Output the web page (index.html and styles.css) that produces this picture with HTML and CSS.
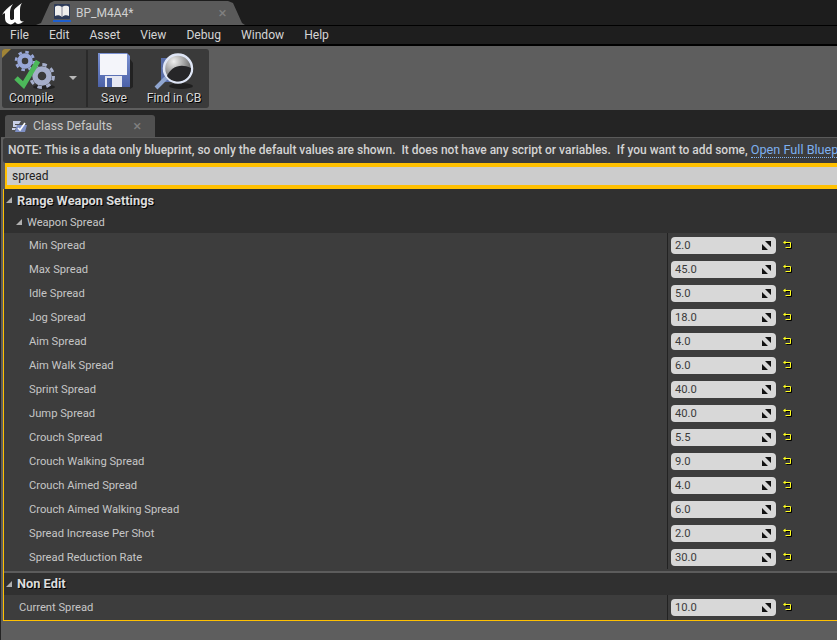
FILE: index.html
```html
<!DOCTYPE html>
<html lang="en">
<head>
<meta charset="utf-8">
<title>BP_M4A4</title>
<link rel="stylesheet" href="styles.css">
</head>
<body>
<div class="titlebar">
  <svg class="ue-logo" width="24" height="24" viewBox="0 0 24 24"><path fill="#fff" d="M1 14 C3 10 7 6 12 3 C10 6 9 8 9 11 L9 17 C9 19 11 20 13 18 L13 9 C14 7 17 5 21 2 C19 5 19 7 19 10 L19 18 C19 20 21 21 23 20 C21 22 19 23 17 23 C16 23 15 22 14 21 C12 23 10 24 8 23 C5 22 4 20 4 17 L4 13 C4 12 3 12 1 14 Z"/></svg>
  <div class="doc-tab">
    <svg class="book" width="18" height="19" viewBox="0 0 18 19"><rect x="1" y="1" width="16" height="15" rx="1" fill="#2c3a58"/><path fill="#eee" d="M2 4 C4 2 7 3 9 4 C11 3 14 2 16 4 L16 13 C14 12 11 12 9 14 C7 12 4 12 2 13 Z"/><path stroke="#889" stroke-width="1" d="M9 4 V14"/><rect x="0" y="17" width="18" height="2" fill="#1d5fd0"/></svg>
    <span class="doc-name">BP_M4A4*</span>
    <span class="close doc-close">×</span>
  </div>
</div>
<nav class="menubar">
  <span>File</span><span>Edit</span><span>Asset</span><span>View</span><span>Debug</span><span>Window</span><span>Help</span>
</nav>
<div class="toolstrip">
  <div class="toolbar">
    <div class="corner"></div>
    <div class="tool tool-compile">
      <svg width="44" height="40" viewBox="0 0 44 40">
        <ellipse cx="30" cy="36" rx="11" ry="2.5" fill="#222"/>
        <circle cx="11" cy="10" r="5.5" fill="none" stroke="#98a7d8" stroke-width="4.5"/>
        <circle cx="11" cy="10" r="9" fill="none" stroke="#98a7d8" stroke-width="2.6" stroke-dasharray="3.5 3.57"/>
        <circle cx="28" cy="25" r="7" fill="none" stroke="#a5aeca" stroke-width="5.5"/>
        <circle cx="28" cy="25" r="11.5" fill="none" stroke="#a5aeca" stroke-width="3" stroke-dasharray="4.5 4.53"/>
        <path d="M2 27 L9.5 34 L24 10" fill="none" stroke="#4cb85a" stroke-width="5"/>
      </svg>
      <span>Compile</span>
      <i class="caret"></i>
    </div>
    <div class="divider"></div>
    <div class="tool tool-save">
      <svg width="34" height="40" viewBox="0 0 34 40">
        <defs><linearGradient id="disk" x1="0" y1="0" x2="0" y2="1"><stop offset="0" stop-color="#7c92d2"/><stop offset="1" stop-color="#4c62a8"/></linearGradient></defs>
        <path d="M1 2 H30 L33 5 V36 H1 Z" fill="url(#disk)"/>
        <rect x="3" y="3" width="27" height="21" fill="#f4f5fa"/>
        <rect x="8" y="25" width="17" height="11" fill="#e6e8f2"/>
        <rect x="10" y="27" width="5" height="9" fill="#4a62a8"/>
        <path d="M33 8 L36 12 V36 L33 38 Z" fill="#222"/>
      </svg>
      <span>Save</span>
    </div>
    <div class="tool tool-find">
      <svg width="42" height="40" viewBox="0 0 42 40">
        <defs><radialGradient id="lens" cx="0.35" cy="0.25" r="0.8"><stop offset="0" stop-color="#f0f0f0"/><stop offset="0.6" stop-color="#8c8c8c"/><stop offset="1" stop-color="#444"/></radialGradient></defs>
        <ellipse cx="28" cy="35" rx="12" ry="3" fill="#1f1f1f"/>
        <rect x="8" y="7" width="14" height="24" fill="#5a6ea8"/>
        <path d="M3 37 L13 27" stroke="#8fa5cf" stroke-width="4" fill="none"/>
        <circle cx="25" cy="17.5" r="14" fill="url(#lens)" stroke="#dfe6f6" stroke-width="2.5"/>
        <path d="M14 25 C18 16 27 12 38 17 C38 25 32 30.500 25 30.500 C20 30.500 16 28 14 25 Z" fill="#262628"/>
      </svg>
      <span>Find in CB</span>
    </div>
  </div>
</div>
<div class="tabstrip">
  <div class="panel-tab">
    <svg width="16" height="13" viewBox="0 0 16 13"><path d="M1 1 H9 L7 4 H3 V5 H6 L5 7 H1 Z M0 8 H4 L3 10 H0 Z" fill="#c8cfe6"/><path d="M5 5 H15 L13 12 H3 Z" fill="#7e8fc4"/><path d="M6 8 L8 10 L13 3" fill="none" stroke="#fff" stroke-width="1.6"/></svg>
    <span class="panel-name">Class Defaults</span>
    <span class="close panel-close">×</span>
  </div>
</div>
<main class="panel">
  <div class="note">NOTE: This is a data only blueprint, so only the default values are shown.&nbsp; It does not have any script or variables.&nbsp; If you want to add some, <a class="link">Open Full Blueprint Editor</a></div>
  <div class="search">spread</div>
  <div class="details">
    <div class="cat"><i class="tri"></i>Range Weapon Settings</div>
    <div class="subcat"><i class="tri"></i>Weapon Spread</div>
    <div class="row"><div class="name">Min Spread</div><div class="val"><div class="box">2.0<svg class="spin" viewBox="0 0 9 9"><path d="M3 0 H9 V6 Z M0 3 L6 9 H0 Z"/></svg></div><svg class="reset" viewBox="0 0 9 9"><path d="M1 1.500 H7.500 V6.500 H2.500"/><path class="head" d="M0 1.500 L2.500 -0.500 V3.500 Z"/></svg></div></div>
    <div class="row"><div class="name">Max Spread</div><div class="val"><div class="box">45.0<svg class="spin" viewBox="0 0 9 9"><path d="M3 0 H9 V6 Z M0 3 L6 9 H0 Z"/></svg></div><svg class="reset" viewBox="0 0 9 9"><path d="M1 1.500 H7.500 V6.500 H2.500"/><path class="head" d="M0 1.500 L2.500 -0.500 V3.500 Z"/></svg></div></div>
    <div class="row"><div class="name">Idle Spread</div><div class="val"><div class="box">5.0<svg class="spin" viewBox="0 0 9 9"><path d="M3 0 H9 V6 Z M0 3 L6 9 H0 Z"/></svg></div><svg class="reset" viewBox="0 0 9 9"><path d="M1 1.500 H7.500 V6.500 H2.500"/><path class="head" d="M0 1.500 L2.500 -0.500 V3.500 Z"/></svg></div></div>
    <div class="row"><div class="name">Jog Spread</div><div class="val"><div class="box">18.0<svg class="spin" viewBox="0 0 9 9"><path d="M3 0 H9 V6 Z M0 3 L6 9 H0 Z"/></svg></div><svg class="reset" viewBox="0 0 9 9"><path d="M1 1.500 H7.500 V6.500 H2.500"/><path class="head" d="M0 1.500 L2.500 -0.500 V3.500 Z"/></svg></div></div>
    <div class="row"><div class="name">Aim Spread</div><div class="val"><div class="box">4.0<svg class="spin" viewBox="0 0 9 9"><path d="M3 0 H9 V6 Z M0 3 L6 9 H0 Z"/></svg></div><svg class="reset" viewBox="0 0 9 9"><path d="M1 1.500 H7.500 V6.500 H2.500"/><path class="head" d="M0 1.500 L2.500 -0.500 V3.500 Z"/></svg></div></div>
    <div class="row"><div class="name">Aim Walk Spread</div><div class="val"><div class="box">6.0<svg class="spin" viewBox="0 0 9 9"><path d="M3 0 H9 V6 Z M0 3 L6 9 H0 Z"/></svg></div><svg class="reset" viewBox="0 0 9 9"><path d="M1 1.500 H7.500 V6.500 H2.500"/><path class="head" d="M0 1.500 L2.500 -0.500 V3.500 Z"/></svg></div></div>
    <div class="row"><div class="name">Sprint Spread</div><div class="val"><div class="box">40.0<svg class="spin" viewBox="0 0 9 9"><path d="M3 0 H9 V6 Z M0 3 L6 9 H0 Z"/></svg></div><svg class="reset" viewBox="0 0 9 9"><path d="M1 1.500 H7.500 V6.500 H2.500"/><path class="head" d="M0 1.500 L2.500 -0.500 V3.500 Z"/></svg></div></div>
    <div class="row"><div class="name">Jump Spread</div><div class="val"><div class="box">40.0<svg class="spin" viewBox="0 0 9 9"><path d="M3 0 H9 V6 Z M0 3 L6 9 H0 Z"/></svg></div><svg class="reset" viewBox="0 0 9 9"><path d="M1 1.500 H7.500 V6.500 H2.500"/><path class="head" d="M0 1.500 L2.500 -0.500 V3.500 Z"/></svg></div></div>
    <div class="row"><div class="name">Crouch Spread</div><div class="val"><div class="box">5.5<svg class="spin" viewBox="0 0 9 9"><path d="M3 0 H9 V6 Z M0 3 L6 9 H0 Z"/></svg></div><svg class="reset" viewBox="0 0 9 9"><path d="M1 1.500 H7.500 V6.500 H2.500"/><path class="head" d="M0 1.500 L2.500 -0.500 V3.500 Z"/></svg></div></div>
    <div class="row"><div class="name">Crouch Walking Spread</div><div class="val"><div class="box">9.0<svg class="spin" viewBox="0 0 9 9"><path d="M3 0 H9 V6 Z M0 3 L6 9 H0 Z"/></svg></div><svg class="reset" viewBox="0 0 9 9"><path d="M1 1.500 H7.500 V6.500 H2.500"/><path class="head" d="M0 1.500 L2.500 -0.500 V3.500 Z"/></svg></div></div>
    <div class="row"><div class="name">Crouch Aimed Spread</div><div class="val"><div class="box">4.0<svg class="spin" viewBox="0 0 9 9"><path d="M3 0 H9 V6 Z M0 3 L6 9 H0 Z"/></svg></div><svg class="reset" viewBox="0 0 9 9"><path d="M1 1.500 H7.500 V6.500 H2.500"/><path class="head" d="M0 1.500 L2.500 -0.500 V3.500 Z"/></svg></div></div>
    <div class="row"><div class="name">Crouch Aimed Walking Spread</div><div class="val"><div class="box">6.0<svg class="spin" viewBox="0 0 9 9"><path d="M3 0 H9 V6 Z M0 3 L6 9 H0 Z"/></svg></div><svg class="reset" viewBox="0 0 9 9"><path d="M1 1.500 H7.500 V6.500 H2.500"/><path class="head" d="M0 1.500 L2.500 -0.500 V3.500 Z"/></svg></div></div>
    <div class="row"><div class="name">Spread Increase Per Shot</div><div class="val"><div class="box">2.0<svg class="spin" viewBox="0 0 9 9"><path d="M3 0 H9 V6 Z M0 3 L6 9 H0 Z"/></svg></div><svg class="reset" viewBox="0 0 9 9"><path d="M1 1.500 H7.500 V6.500 H2.500"/><path class="head" d="M0 1.500 L2.500 -0.500 V3.500 Z"/></svg></div></div>
    <div class="row"><div class="name">Spread Reduction Rate</div><div class="val"><div class="box">30.0<svg class="spin" viewBox="0 0 9 9"><path d="M3 0 H9 V6 Z M0 3 L6 9 H0 Z"/></svg></div><svg class="reset" viewBox="0 0 9 9"><path d="M1 1.500 H7.500 V6.500 H2.500"/><path class="head" d="M0 1.500 L2.500 -0.500 V3.500 Z"/></svg></div></div>
    <div class="cat cat-second"><i class="tri"></i>Non Edit</div>
    <div class="row row-flat"><div class="name">Current Spread</div><div class="val"><div class="box">10.0<svg class="spin" viewBox="0 0 9 9"><path d="M3 0 H9 V6 Z M0 3 L6 9 H0 Z"/></svg></div><svg class="reset" viewBox="0 0 9 9"><path d="M1 1.500 H7.500 V6.500 H2.500"/><path class="head" d="M0 1.500 L2.500 -0.500 V3.500 Z"/></svg></div></div>
  </div>
</main>
</body>
</html>
```
FILE: styles.css
```css
* { box-sizing: border-box; }
html, body { margin: 0; height: 640px; overflow: hidden; }
body { background: #242424; font: 12px Roboto, sans-serif; color: #d6d6d6; width: 837px; }

.titlebar { height: 25px; background: #1d1d1d; display: flex; align-items: flex-end; position: relative; }
.ue-logo { position: absolute; left: 1px; top: 1px; }
.doc-tab { margin-left: 36px; width: 209px; height: 24px; background: #5a5a5a; display: flex; align-items: center; padding-left: 17px; clip-path: polygon(0 100%, 5px 92%, 14px 8%, 18px 0, 192px 0, 197px 8%, 206px 92%, 100% 100%); }
.book { flex: none; margin-top: -2px; }
.doc-name { margin-left: 5px; color: #d0d0d0; font-size: 12px; }
.close { color: #808080; font-size: 15px; line-height: 1; }
.doc-close { margin-left: 85px; }

.menubar { height: 21px; background: #1e1e1e; border-top: 1px solid #000; border-bottom: 2px solid #000; display: flex; gap: 20px; padding-left: 10px; align-items: center; color: #d4d4d4; font-size: 12.1px; }

.toolstrip { height: 64px; background: #5e5e5e; padding: 3px 2px 2px; }
.toolbar { width: 207px; height: 59px; background: #3a3a3a; border-radius: 3px; display: flex; position: relative; overflow: hidden; }
.corner { position: absolute; left: 0; top: 0; border-top: 9px solid #a08436; border-right: 9px solid transparent; }
.tool { display: flex; flex-direction: column; align-items: center; text-shadow: 1px 1px 0 #000; color: #d8d8d8; line-height: 14px; position: relative; font-size: 12.2px; }
.tool svg { display: block; flex: none; margin-top: 2px; height: 40px; overflow: visible; }
.tool-compile { width: 84px; align-items: flex-start; padding-left: 7px; }
.tool-compile svg { margin-left: 5px; }
.caret { position: absolute; left: 67px; top: 27px; border-top: 4px solid #b8b8b8; border-left: 4px solid transparent; border-right: 4px solid transparent; }
.divider { width: 2px; background: #2a2a2a; margin: 1px 0; }
.tool-save { width: 50px; margin-left: 1px; }
.tool-find { width: 68px; margin-left: 1px; }

.tabstrip { height: 27px; background: #242424; padding: 5px 0 0 5px; }
.panel-tab { width: 150px; height: 22px; background: #505050; border-radius: 3px 3px 0 0; display: flex; align-items: center; padding-left: 7px; color: #c8c8c8; font-size: 12.3px; }
.panel-name { margin-left: 5px; }
.panel-close { margin-left: 21px; }

.panel { margin-left: 1px; height: 503px; background: #5e5e5e; border-top: 1px solid #5a5a5a; }
.note { height: 25px; margin: 0 0 0 2px; background: #3c3c3c; border-radius: 3px 0 0 3px; line-height: 24px; padding-left: 5px; white-space: nowrap; overflow: hidden; font-weight: 500; color: #d4d4d4; font-size: 11.99px; }
.link { color: #7eb0ef; font-weight: 400; font-size: 12.7px; border-bottom: 1px dotted #7eb0ef; }
.search { height: 26px; margin-left: 4px; border: solid #ffc000; border-width: 4px 0 4px 2px; background: #cccccc; color: #222; line-height: 19px; padding-left: 5px; }
.details { margin: 0 0 0 2px; border: 1px solid #ffc000; border-top: none; border-right: none; height: 432px; background: #3d3d3d; }
.cat { height: 22px; background: #303030; font-weight: 700; font-size: 12.8px; color: #dcdcdc; text-shadow: 1px 1px 0 #000; line-height: 24px; padding-left: 13px; position: relative; }
.cat .tri { left: 2px; top: 8px; }
.subcat { height: 22px; background: #303030; color: #c8c8c8; font-size: 11.1px; line-height: 24px; padding-left: 23px; position: relative; }
.subcat .tri { left: 12px; top: 8px; }
.tri { position: absolute; width: 0; height: 0; border-bottom: 6px solid #b0b0b0; border-left: 6px solid transparent; }
.cat-second { border-top: 2px solid #5c5c5c; height: 24px; margin-top: 2px; line-height: 22px; }
.row { height: 24px; display: flex; background: #3d3d3d; }
.name { width: 663px; padding-left: 25px; line-height: 26px; font-size: 11.2px; color: #c6c6c6; flex: none; }
.row-flat { height: 25px; }
.row-flat .name { padding-left: 15px; }
.val { flex: 1; border-left: 1px solid #222; display: flex; align-items: center; padding-left: 3px; }
.box { width: 105px; height: 17px; background: #d8d8d8; border-radius: 4px; color: #3a3a3a; line-height: 17px; padding-left: 4px; font-size: 11.2px; display: flex; align-items: center; justify-content: space-between; padding-right: 5px; }
.spin { width: 9px; height: 9px; fill: #111; }
.reset { width: 9px; height: 9px; margin-left: 7px; overflow: visible; filter: drop-shadow(1px 1px 0 #000); }
.reset path { fill: none; stroke: #ffff20; stroke-width: 1; }
.reset .head { fill: #ffff20; stroke: none; }
```
